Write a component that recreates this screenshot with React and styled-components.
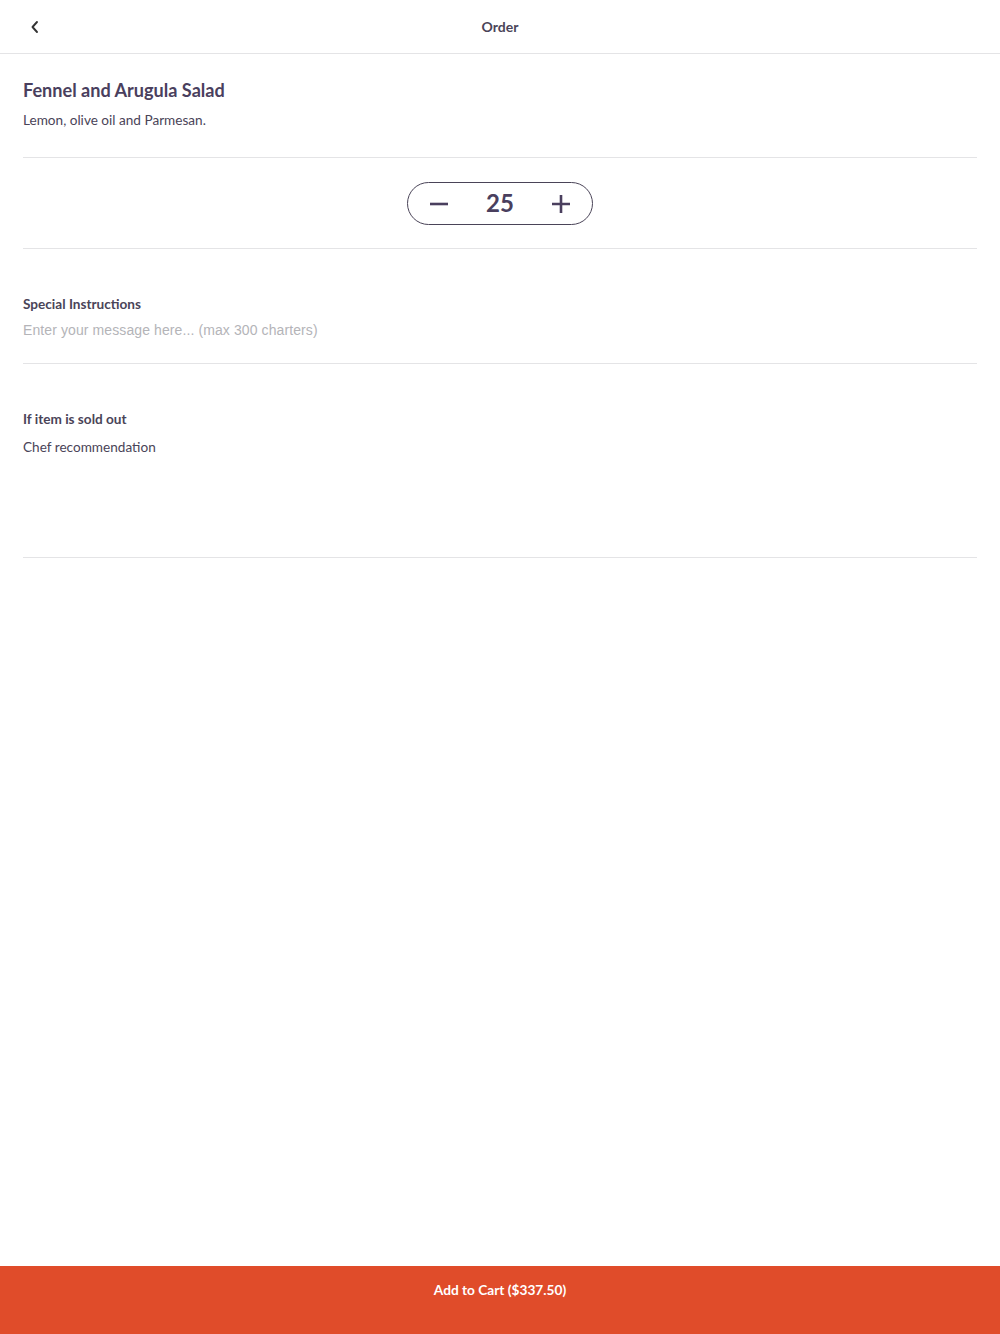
import React, { useState } from "react";
import styled, { createGlobalStyle } from "styled-components";

const Global = createGlobalStyle`
  html, body { margin: 0; padding: 0; background: #fff; }
  body { font-family: Lato, "Noto Sans", sans-serif; color: #4a3f5e; }
  #root { min-height: 100vh; }
`;

const Page = styled.div`
  height: 1334px;
  display: flex;
  flex-direction: column;
`;

const Header = styled.header`
  height: 54px;
  border-bottom: 1px solid #e4e4e6;
  display: grid;
  grid-template-columns: 1fr auto 1fr;
  align-items: center;
  padding: 0 23px;
  box-sizing: border-box;
`;

const BackButton = styled.button`
  border: none;
  background: none;
  padding: 0;
  width: 24px;
  height: 24px;
  display: flex;
  align-items: center;
  justify-content: center;
  cursor: pointer;
`;

const HeaderTitle = styled.div`
  font-weight: 700;
  font-size: 14px;
  color: #4a4458;
`;

const Content = styled.main`
  flex: 1;
  padding: 0 23px;
`;

const Section = styled.section`
  border-bottom: 1px solid #e4e4e6;
  padding: ${(p) => p.$pad};
  min-height: ${(p) => p.$minH || "auto"};
  box-sizing: border-box;
`;

const Title = styled.h1`
  margin: 0;
  font-size: 18.1px;
  font-weight: 700;
  color: #4a3f5e;
  line-height: 22px;
`;

const Desc = styled.p`
  margin: 11px 0 0;
  font-size: 13.6px;
  line-height: 17px;
  color: #4a4458;
`;

const StepperRow = styled.div`
  display: flex;
  justify-content: center;
`;

const Stepper = styled.div`
  width: 186px;
  height: 43px;
  box-sizing: border-box;
  border: 1px solid #4a4458;
  border-radius: 22px;
  display: flex;
  align-items: center;
  justify-content: space-between;
  padding: 0 20px;
`;

const StepBtn = styled.button`
  border: none;
  background: none;
  padding: 0;
  width: 22px;
  height: 22px;
  display: flex;
  align-items: center;
  justify-content: center;
  cursor: pointer;
`;

const Qty = styled.span`
  font-size: 24px;
  font-weight: 700;
  line-height: 24px;
  margin-top: -2px;
  color: #4a3f5e;
`;

const Label = styled.div`
  font-size: 13.6px;
  font-weight: 700;
  color: #4a4458;
  line-height: 17px;
`;

const Input = styled.input`
  display: block;
  width: 100%;
  margin-top: 9px;
  border: none;
  outline: none;
  padding: 0;
  font-family: "Liberation Sans", Arial, sans-serif;
  font-size: 14px;
  letter-spacing: 0.1px;
  line-height: 17px;
  color: #4a4458;
  &::placeholder { color: #b4b4b8; }
`;

const Value = styled.div`
  margin-top: 11px;
  font-size: 13.6px;
  line-height: 17px;
  color: #4a4458;
`;

const CartButton = styled.button`
  height: 68px;
  border: none;
  background: #e04c2a;
  color: #fff;
  font-family: Lato, sans-serif;
  font-weight: 700;
  font-size: 13.7px;
  display: flex;
  justify-content: center;
  padding-top: 15px;
  box-sizing: border-box;
  width: 100%;
  cursor: pointer;
`;

export default function App() {
  const [qty, setQty] = useState(25);
  const [msg, setMsg] = useState("");
  const price = 13.5;
  return (
    <Page>
      <Global />
      <Header>
        <BackButton aria-label="Back">
          <svg width="10" height="14" viewBox="0 0 10 14">
            <path d="M7 2 L2.5 7 L7 12" fill="none" stroke="#333" strokeWidth="1.9" strokeLinecap="round" strokeLinejoin="round" />
          </svg>
        </BackButton>
        <HeaderTitle>Order</HeaderTitle>
        <div />
      </Header>
      <Content>
        <Section $pad="25px 0 28px">
          <Title>Fennel and Arugula Salad</Title>
          <Desc>Lemon, olive oil and Parmesan.</Desc>
        </Section>
        <Section $pad="24px 0 23px">
          <StepperRow>
            <Stepper>
              <StepBtn aria-label="Decrease" onClick={() => setQty((q) => Math.max(1, q - 1))}>
                <svg width="20" height="20" viewBox="0 0 20 20">
                  <path d="M1 10 H19" stroke="#4a3f5e" strokeWidth="2.6" />
                </svg>
              </StepBtn>
              <Qty>{qty}</Qty>
              <StepBtn aria-label="Increase" onClick={() => setQty((q) => q + 1)}>
                <svg width="20" height="20" viewBox="0 0 20 20">
                  <path d="M1 10 H19 M10 1 V19" stroke="#4a3f5e" strokeWidth="2.6" />
                </svg>
              </StepBtn>
            </Stepper>
          </StepperRow>
        </Section>
        <Section $pad="47px 0 24px">
          <Label>Special Instructions</Label>
          <Input
            value={msg}
            onChange={(e) => setMsg(e.target.value)}
            maxLength={300}
            placeholder="Enter your message here... (max 300 charters)"
          />
        </Section>
        <Section $pad="47px 0 0" $minH="194px">
          <Label>If item is sold out</Label>
          <Value>Chef recommendation</Value>
        </Section>
      </Content>
      <CartButton>Add to Cart (${(qty * price).toFixed(2)})</CartButton>
    </Page>
  );
}
